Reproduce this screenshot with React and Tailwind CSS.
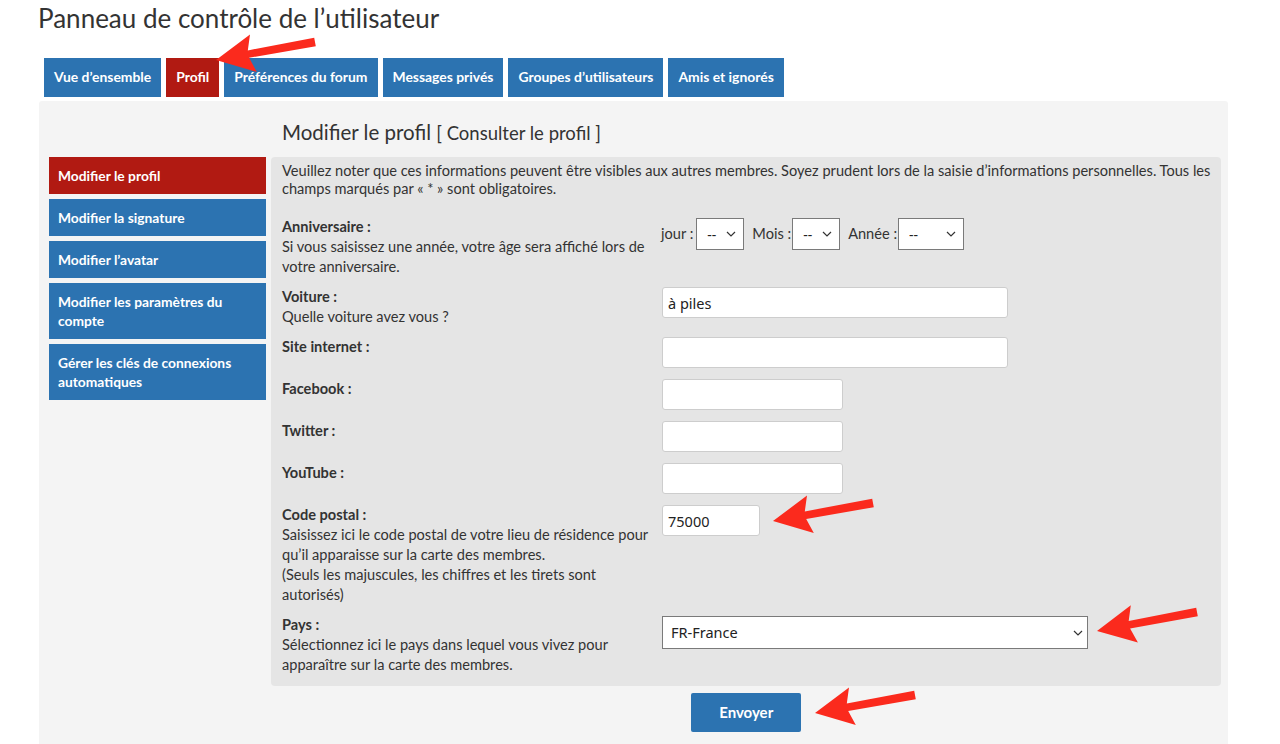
import React from 'react';

const tabs = [
  { label: 'Vue d’ensemble' },
  { label: 'Profil', active: true },
  { label: 'Préférences du forum' },
  { label: 'Messages privés' },
  { label: 'Groupes d’utilisateurs' },
  { label: 'Amis et ignorés' },
];

const sideLinks = [
  { label: 'Modifier le profil', active: true },
  { label: 'Modifier la signature' },
  { label: 'Modifier l’avatar' },
  { label: 'Modifier les paramètres du compte' },
  { label: 'Gérer les clés de connexions automatiques' },
];

// red callout arrows: tip + tail in page coordinates
const arrows = [
  { tip: [216, 60], tail: [315, 42] },
  { tip: [773, 521], tail: [873, 503] },
  { tip: [1097, 631], tail: [1197, 612] },
  { tip: [815, 713], tail: [915, 695] },
];

function arrowPoints({ tip, tail }) {
  const [tx, ty] = tip;
  const [ex, ey] = tail;
  const len = Math.hypot(ex - tx, ey - ty);
  const dx = (ex - tx) / len;
  const dy = (ey - ty) / len;
  const nx = -dy;
  const ny = dx;
  const head = 38;
  const neck = 33;
  const wing = 19;
  const shaft = 3.8;
  const p = (a, b) => `${(tx + dx * a + nx * b).toFixed(1)},${(ty + dy * a + ny * b).toFixed(1)}`;
  return [
    p(0, 0),
    p(head, wing),
    p(neck, shaft),
    p(len, shaft + 0.5),
    p(len, -shaft - 0.5),
    p(neck, -shaft),
    p(head, -wing),
  ].join(' ');
}

const Chevron = ({ className }) => (
  <svg className={className} width="10" height="6" viewBox="0 0 10 6" fill="none">
    <path d="M1 1l4 4 4-4" stroke="#333" strokeWidth="1.2" />
  </svg>
);

const DateSelect = ({ width }) => (
  <div className={`relative h-[32px] ${width}`}>
    <select className="appearance-none w-full h-full bg-white border border-[#7a7a7a] pl-[10px] text-[14px] text-[#222] outline-none font-['Noto_Sans',sans-serif]">
      <option>--</option>
    </select>
    <Chevron className="absolute right-[8px] top-[13px] pointer-events-none" />
  </div>
);

const TextInput = ({ value, width }) => (
  <input
    type="text"
    defaultValue={value}
    className={`h-[31px] ${width} bg-white border border-[#cdcdcd] rounded-[3px] px-[5px] text-[14.5px] text-[#222] outline-none font-['Noto_Sans',sans-serif]`}
  />
);

const Row = ({ label, desc, children }) => (
  <div className="grid grid-cols-[380px_1fr] items-start min-h-[32px]">
    <div className="leading-[20px] text-[#333] whitespace-nowrap">
      <div className="font-bold text-[14.6px]">{label}</div>
      {desc && desc.map((d) => <div key={d} className="text-[14.6px]">{d}</div>)}
    </div>
    <div>{children}</div>
  </div>
);

export default function App() {
  return (
    <div className="relative w-[1280px] h-[744px] overflow-hidden bg-white font-['Lato',sans-serif] text-[#333]">
      <div className="ml-[38px] w-[1190px]">
        <h1 className="pt-[3px] text-[26px] leading-[30px] text-[#333]">Panneau de contrôle de l’utilisateur</h1>

        <div className="mt-[25px] ml-[6px] flex gap-[5px]">
          {tabs.map((t) => (
            <div
              key={t.label}
              className={`h-[39px] px-[10px] flex items-center text-[13.9px] font-bold text-white ${t.active ? 'bg-[#b11a12]' : 'bg-[#2c73b1]'}`}
            >
              {t.label}
            </div>
          ))}
        </div>

        <div className="mt-[4px] ml-px bg-[#f4f4f4] rounded-t-[3px] px-[10px] pb-[30px] grid grid-cols-[217px_1fr] gap-[5px]">
          <nav className="pt-[56px] flex flex-col gap-[5px]">
            {sideLinks.map((l) => (
              <div
                key={l.label}
                className={`pl-[9px] pr-[30px] py-[9px] text-[13.8px] leading-[19px] font-bold text-white ${l.active ? 'bg-[#b11a12]' : 'bg-[#2c73b1]'}`}
              >
                {l.label}
              </div>
            ))}
          </nav>

          <div>
            <h2 className="pt-[19px] pl-[11px] h-[56px] text-[20.5px] leading-[24px] text-[#333]">
              Modifier le profil <span className="text-[18.5px]">[ Consulter le profil ]</span>
            </h2>

            <div className="bg-[#e5e5e5] rounded-[4px] px-[11px] pt-[5px] pb-[11px]">
              <p className="text-[14.6px] leading-[18px] text-[#333] whitespace-nowrap">
                Veuillez noter que ces informations peuvent être visibles aux autres membres. Soyez prudent lors de la saisie d’informations personnelles. Tous les
                <br />
                champs marqués par « * » sont obligatoires.
              </p>

              <div className="mt-[19px] flex flex-col gap-[10px]">
                <Row
                  label="Anniversaire :"
                  desc={['Si vous saisissez une année, votre âge sera affiché lors de', 'votre anniversaire.']}
                >
                  <div className="flex items-center text-[14.6px] pt-px">
                    <span className="-ml-px mr-[3px]">jour :</span>
                    <DateSelect width="w-[48px]" />
                    <span className="ml-[8px] mr-[1px]">Mois :</span>
                    <DateSelect width="w-[48px]" />
                    <span className="ml-[8px] mr-[1px]">Année :</span>
                    <DateSelect width="w-[66px]" />
                  </div>
                </Row>

                <Row label="Voiture :" desc={['Quelle voiture avez vous ?']}>
                  <TextInput value="à piles" width="w-[346px]" />
                </Row>

                <Row label="Site internet :">
                  <TextInput value="" width="w-[346px]" />
                </Row>

                <Row label="Facebook :">
                  <TextInput value="" width="w-[181px]" />
                </Row>

                <Row label="Twitter :">
                  <TextInput value="" width="w-[181px]" />
                </Row>

                <Row label="YouTube :">
                  <TextInput value="" width="w-[181px]" />
                </Row>

                <Row
                  label="Code postal :"
                  desc={[
                    'Saisissez ici le code postal de votre lieu de résidence pour',
                    'qu’il apparaisse sur la carte des membres.',
                    '(Seuls les majuscules, les chiffres et les tirets sont',
                    'autorisés)',
                  ]}
                >
                  <TextInput value="75000" width="w-[98px]" />
                </Row>

                <Row
                  label="Pays :"
                  desc={['Sélectionnez ici le pays dans lequel vous vivez pour', 'apparaître sur la carte des membres.']}
                >
                  <div className="relative w-[426px] h-[33px] mt-px">
                    <select className="appearance-none w-full h-full bg-white border border-[#7a7a7a] pl-[8px] text-[14.5px] text-[#222] outline-none font-['Noto_Sans',sans-serif]">
                      <option>FR-France</option>
                    </select>
                    <Chevron className="absolute right-[5px] top-[14px] pointer-events-none" />
                  </div>
                </Row>
              </div>
            </div>

            <div className="mt-[7px] flex justify-center">
              <button className="w-[110px] h-[39px] rounded-[2px] bg-[#2c73b1] text-white text-[15px] font-bold">
                Envoyer
              </button>
            </div>
          </div>
        </div>
      </div>

      <svg className="absolute inset-0 pointer-events-none" width="1280" height="744" viewBox="0 0 1280 744">
        {arrows.map((a, i) => (
          <polygon key={i} points={arrowPoints(a)} fill="#fb2a1d" />
        ))}
      </svg>
    </div>
  );
}
